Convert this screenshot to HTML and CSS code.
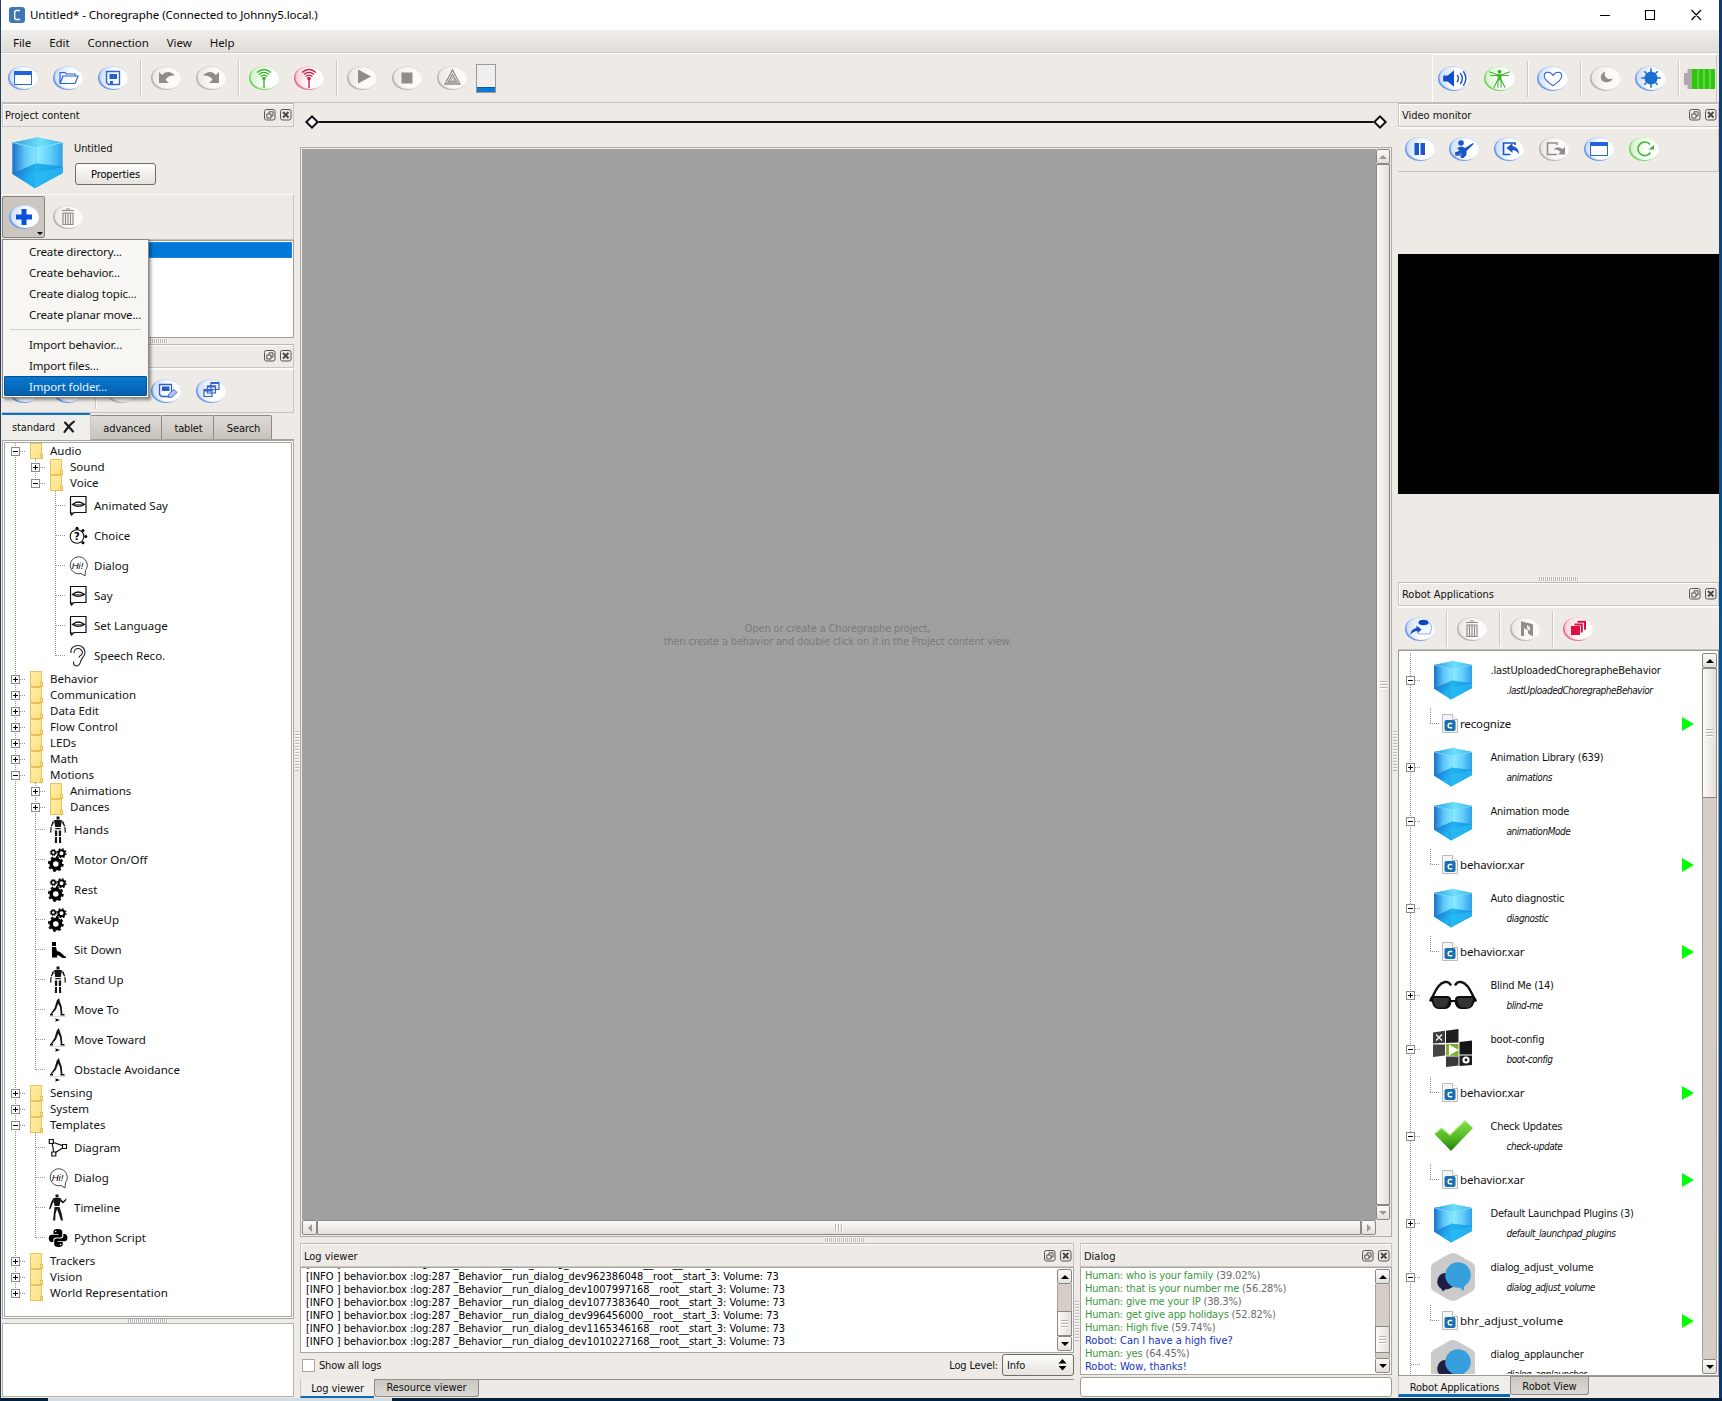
FILE: index.html
```html
<!DOCTYPE html>
<html lang="en">
<head>
<meta charset="utf-8">
<title>Untitled* - Choregraphe</title>
<link rel="stylesheet" href="styles.css">
</head>
<body>
<svg class="defs" width="0" height="0">
  <defs>
    <linearGradient id="g-top" x1="0" y1="0" x2="1" y2="0"><stop offset="0" stop-color="#2a9fe2"/><stop offset=".55" stop-color="#6fe0fa"/><stop offset="1" stop-color="#35b4ee"/></linearGradient>
    <linearGradient id="g-face" x1="0" y1="0" x2="1" y2="0"><stop offset="0" stop-color="#1a6fc8"/><stop offset=".25" stop-color="#5cc6f8"/><stop offset=".5" stop-color="#8debff"/><stop offset=".75" stop-color="#63cffa"/><stop offset="1" stop-color="#2f9fe8"/></linearGradient>
    <linearGradient id="g-low" x1="0" y1="0" x2="1" y2=".3"><stop offset="0" stop-color="#1560c8"/><stop offset=".5" stop-color="#22b4f0"/><stop offset="1" stop-color="#1a8fe2"/></linearGradient>
    <linearGradient id="g-check" x1="0" y1="0" x2="0" y2="1"><stop offset="0" stop-color="#8ade4a"/><stop offset=".6" stop-color="#4fb524"/><stop offset="1" stop-color="#1c7a0c"/></linearGradient>
    <linearGradient id="g-fold" x1="0" y1="0" x2="1" y2="1"><stop offset="0" stop-color="#ffeda6"/><stop offset="1" stop-color="#ffe083"/></linearGradient>
  </defs>
  <symbol id="cube" viewBox="0 0 40 40">
    <path d="M1 5 20 1l19 4v23L18 39.500 1 28.500z" fill="url(#g-face)"/>
    <path d="M1 5 20 1l19 4-20 4z" fill="url(#g-top)"/>
    <path d="M1 28.500l18-8 20 2.500v5L18 39.500z" fill="url(#g-low)"/>
    <path d="M18 39.500l.5-12 20.500-4v4.500z" fill="#2cc4f5" opacity=".6"/>
    <path d="M19 9l-.5 30" stroke="#4ab8f0" stroke-width=".5" opacity=".7"/>
    <path d="M1 5l18 4 20-4" fill="none" stroke="#8fe8ff" stroke-width=".6"/>
  </symbol>
  <symbol id="folder" viewBox="0 0 13 16"><path d="M.5.5h11v11H13v4H.5z" fill="url(#g-fold)" stroke="#e6c35c"/><path d="M10.500 11.500h2v4h-2z" fill="#ffe99a" stroke="#dcb53f" stroke-width=".8"/></symbol>
  <symbol id="say" viewBox="0 0 20 22"><path d="M2.500 19V1.500H18v16H6L3 20.500" fill="none" stroke="#111" stroke-width="1.200"/><path d="M4.500 9.500q5.500-5 12 0q-6.500 3.500-12 0z" fill="none" stroke="#111" stroke-width="1.300"/><path d="M5 9.500h11" stroke="#111" stroke-width=".6"/><path d="M2 17.500h3L3 20.500z" fill="#111"/></symbol>
  <symbol id="choice" viewBox="0 0 20 20"><circle cx="9" cy="10.500" r="6.800" fill="none" stroke="#111" stroke-width="1.100"/><circle cx="9" cy="2.200" r="1.500"/><circle cx="15" cy="4.500" r="1.500"/><circle cx="17.800" cy="10.500" r="1.500"/><circle cx="15" cy="16.800" r="1.500"/></symbol>
  <symbol id="hi" viewBox="0 0 20 22"><path d="M17.500 15.500A8.500 8.500 0 1 0 13 18.500l4 2.500z" fill="none" stroke="#333" stroke-width=".9"/></symbol>
  <symbol id="ear" viewBox="0 0 20 24"><path d="M3 9C2 4 6 1.500 10 1.500s7 3 7 7c0 3.500-3 5-4 8s-1.500 5.500-4.500 5.500-3-2.500-3-4.500M6 9c0-3 2-4.500 4-4.500s4.500 1.500 4.500 4-2.500 2.500-3.500 5" fill="none" stroke="#222" stroke-width="1.100"/></symbol>
  <symbol id="man" viewBox="0 0 20 28"><path d="M8.500.5h3v3h-3zM6 4h8l-1.200 7H7.200zM5 4.500 2.800 10l1.100.4L6 6.500zM15 4.500l2.200 5.500-1.100.4L14 6.500zM2.500 11l1.200.3-.4 5.500-1.200-.3zM17.500 11l-1.200.3.4 5.500 1.200-.3zM7.300 12h5.400v1.200H7.300zM6.800 14.500h2.400v5.500H7zM10.800 14.500h2.400l-.2 5.500h-2.200zM7 21h2v6H6.800zM11 21h2l.2 6H11z" fill="#151515"/></symbol>
  <symbol id="gears" viewBox="0 0 20 24"><g fill="none" stroke="#000"><circle cx="7.800" cy="16" r="4.600" stroke-width="3.600"/><circle cx="7.800" cy="16" r="7" stroke-width="1.800" stroke-dasharray="2.750"/><circle cx="13.500" cy="5.200" r="3" stroke-width="2"/><circle cx="13.500" cy="5.200" r="4.500" stroke-width="1.200" stroke-dasharray="1.770"/><circle cx="5.300" cy="4.600" r="2" stroke-width="1.500"/><circle cx="5.300" cy="4.600" r="3.100" stroke-width="1" stroke-dasharray="1.220"/></g></symbol>
  <symbol id="sit" viewBox="0 0 20 20"><path d="M4 2h4v4H4zM4 7h4l1 4 3 1 5 4.500h1V18h-3.500l-4.500-3-1 1v1.500H4z"/></symbol>
  <symbol id="move" viewBox="0 0 20 26"><path d="M8.800 3.500 11 1l.7 3 2 5.500.8 8.500h-1.600l-1-8-1.700-3.500L8 12.500l-5 5.500L2.500 17 6.500 11z" fill="#151515"/><path d="M2 17h3v1.400H2zM12.500 17h4v1.400h-4z" fill="#151515"/><path d="M1 19.500h17" stroke="#ccc" stroke-width=".7"/><path d="M7 21.300l5 1.700-5 1.700 1-1.700z"/></symbol>
  <symbol id="diagram" viewBox="0 0 20 20"><g fill="#fff" stroke="#111" stroke-width="1.200"><path d="M4 4l13 4.500L6 15.500z"/><path d="M1.300 1.500h4v4h-4zM14.500 6.500h4v4h-4zM3.800 14h4v4h-4z"/></g></symbol>
  <symbol id="timeline" viewBox="0 0 20 28"><path d="M7.500.5h3v3h-3zM5 4h8l-1.500 8H6.500zM4.500 5L2.500 10l-1.500 5h1.500L4.500 10l1.500-3zM13 5l2 2.500L18.500 4l-.5 2.500L15 9.500l-2.500-2zM6.500 13h5l2 6 1.500 7.500h-2L10.500 19 9 15l-1.500 5-.3 6.500H5z" fill="#151515"/></symbol>
  <symbol id="python" viewBox="0 0 22 22"><path d="M10.800 1C7 1 6 2.300 6 4v2.500h5.500V7.300H4C1.800 7.300.8 9 .8 11.300S2 15.500 4 15.500h1.800v-2.400c0-1.600 1.200-2.600 2.700-2.600h5c1.300 0 2.200-1 2.200-2.300V4c0-1.800-1.700-3-4.900-3z"/><path d="M11.400 21c3.800 0 4.800-1.300 4.800-3v-2.500h-5.500v-.8h7.500c2.200 0 3.200-1.700 3.200-4S20.200 6.500 18.200 6.500h-1.300v2.400c0 1.600-1.200 2.600-2.700 2.600h-5c-1.300 0-2.400 1-2.400 2.300V18c0 1.800 1.400 3 4.600 3z"/><circle cx="8.400" cy="3.800" r=".9" fill="#fff"/><circle cx="13.800" cy="18.200" r=".9" fill="#fff"/></symbol>
  <symbol id="xar" viewBox="0 0 16 19"><path d="M.5.5h10l5 5v13H.5z" fill="#f3f5f6" stroke="#b9bcbe"/><path d="M10.500.5v5h5" fill="#fff" stroke="#b9bcbe"/><rect x="2.500" y="6" width="11" height="11" rx="2" fill="#1a6fae"/><path d="M10.300 9.500H8q-1.800 0-1.800 2.100T8 13.700h2.300" fill="none" stroke="#fff" stroke-width="1.500"/></symbol>
  <symbol id="play" viewBox="0 0 12 14"><path d="M0 0l12 7-12 7z" fill="#0f0"/></symbol>
  <symbol id="float" viewBox="0 0 12 12"><rect x=".5" y=".5" width="10.500" height="10.500" rx="2" fill="none" stroke="#555"/><path d="M5 5V2.800h4V7H7M2.800 5H7v4H2.800z" fill="none" stroke="#555"/></symbol>
  <symbol id="close" viewBox="0 0 12 12"><rect x=".5" y=".5" width="10.500" height="10.500" rx="2" fill="none" stroke="#555"/><path d="M3 3l5.500 5.500M8.500 3L3 8.500" stroke="#4a4a4a" stroke-width="2"/></symbol>
  <symbol id="i-new" viewBox="0 0 30 24"><rect x="6.500" y="5.500" width="17" height="13" fill="#fff" stroke="#2e66d8"/><path d="M6 5h18v4H6z" fill="#2463dd"/></symbol>
  <symbol id="i-open" viewBox="0 0 30 24"><path d="M7 17V6.500h5L13.500 8H22v2M7 17.500 10 10h15l-3 7.500z" fill="none" stroke="#2f63d6" stroke-width="1.200"/></symbol>
  <symbol id="i-save" viewBox="0 0 30 24"><path d="M8.500 5.500h13v13h-11l-2-2z" fill="none" stroke="#2f63d6" stroke-width="1.400"/><path d="M11.500 8h7.500v5h-7.500zM12 15h3v3.500h-3z" fill="#2463c9"/></symbol>
  <symbol id="i-undo" viewBox="0 0 30 24"><path d="M8 6v11h10l-3.500-3.300c1.500-2.700 4.500-4.500 9.500-4.200-4-5-10-4.500-12.800-.5z" fill="currentColor"/></symbol>
  <symbol id="i-redo" viewBox="0 0 30 24"><path d="M23 6v11H13l3.500-3.300C15 11 12 9.200 7 9.500 11 4.500 17 5 19.800 9z" fill="currentColor"/></symbol>
  <symbol id="i-wifi" viewBox="0 0 30 24"><path d="M8 6.500q7-6 14 0M9.800 8.500q5.200-4.200 10.400 0M11.600 10.500q3.400-2.800 6.800 0M15 12v10" fill="none" stroke="currentColor" stroke-width="1.400"/><circle cx="15" cy="12.500" r="1.800" fill="currentColor"/></symbol>
  <symbol id="i-play" viewBox="0 0 30 24"><path d="M11 3.500l13 7-13 7z" fill="currentColor"/></symbol>
  <symbol id="i-stop" viewBox="0 0 30 24"><path d="M9.500 6.500h11v11h-11z" fill="currentColor"/></symbol>
  <symbol id="i-warn" viewBox="0 0 30 24"><path d="M15.500 4 23 18H8zM15.500 8.500l4.300 7.500h-8.600z" fill="none" stroke="currentColor" stroke-width="1.300"/><path d="M15.500 11.500l2 3.500h-4z" fill="none" stroke="currentColor" stroke-width=".8"/></symbol>
  <symbol id="i-plus" viewBox="0 0 30 24"><path d="M12.500 4h5v5.500H23v5h-5.500V20h-5v-5.500H7v-5h5.500z" fill="#0a52d4"/></symbol>
  <symbol id="i-trash" viewBox="0 0 30 24"><path d="M9 5.500h12M13 4h4M10 8h10v11.500H10zM12.500 8v11M15 8v11M17.500 8v11" fill="none" stroke="currentColor" stroke-width="1.200"/></symbol>
  <symbol id="i-savepen" viewBox="0 0 30 24"><path d="M8.500 5.500h12v12h-10l-2-2z" fill="none" stroke="#2f5fc0" stroke-width="1.300"/><path d="M11 7.500h7.500v4.500H11z" fill="#2a5cc0"/><path d="M17 18.500l1-4 5-4 3 3-5 4.500z" fill="#a9c4ee" stroke="#3a67b8" stroke-width=".9"/></symbol>
  <symbol id="i-stack" viewBox="0 0 30 24"><g fill="#eaf2ff" stroke="#3464c4" stroke-width="1.200"><path d="M15 3.500h8v7h-8zM11.500 7h8v7h-8zM8 10.500h8v7H8z"/></g><path d="M15 3h8v2h-8zM11.500 6.500h8v2h-8zM8 10h8v2.500H8z" fill="#3464c4"/></symbol>
  <symbol id="i-sound" viewBox="0 0 30 24"><path d="M5 9h4.500l6-5v16l-6-5H5z" fill="#0f4fc9"/><path d="M18.500 8.500q2.500 3.500 0 7M21.500 6.500q4 5.500 0 11M24.500 5q5 7 0 14" fill="none" stroke="#1d57cc" stroke-width="1.400"/></symbol>
  <symbol id="i-vitruv" viewBox="0 0 30 24"><path d="M5 5.500l10 3.500 10-3.500M6 9h18M14 12l-4.500 9M16 12l4.500 9M13.500 13v8M16.500 13v8" fill="none" stroke="currentColor" stroke-width="1"/><path d="M12.800 8h4.400l-.7 6h-3z" fill="currentColor"/><circle cx="15" cy="5.500" r="1.900" fill="currentColor"/></symbol>
  <symbol id="i-heart" viewBox="0 0 30 24"><path d="M15.500 19C9 14.500 7 12 7 9.500 7 5 13 4.500 15.500 9c2.500-4.500 8.500-4 8.500.5 0 2.500-2 5-8.500 9.500z" fill="#fff" stroke="#2a5fd0"/></symbol>
  <symbol id="i-moon" viewBox="0 0 30 24"><path d="M14.500 5.500c-1.500 5 2.500 8.500 7.500 6.500-2 5.500-11.500 4.500-11.500-1 0-2.500 1.500-4.800 4-5.500z" fill="currentColor"/></symbol>
  <symbol id="i-sun" viewBox="0 0 30 24"><circle cx="15.500" cy="11.500" r="6.300" fill="#1b6fd0"/><path d="M15.500 2v19M6 11.500h19M9 5l13 13M22 5L9 18" stroke="#1b6fd0" stroke-width="1.500"/></symbol>
  <symbol id="i-pause" viewBox="0 0 30 24"><path d="M9.500 6H14v12H9.500zM15.500 6H20v12h-4.500z" fill="#1a56c8"/></symbol>
  <symbol id="i-robot" viewBox="0 0 30 24"><circle cx="12" cy="6" r="2.800" fill="#1a56c8"/><path d="M8 11q5-3 8 0l8-5 .8 1L17.500 14v4l-3 3h-3l1-4.500-5 1-1-2 4-2z" fill="#1a56c8"/><path d="M7 15v3h5" stroke="#1a56c8" stroke-width="1.500" fill="none"/></symbol>
  <symbol id="i-in" viewBox="0 0 30 24"><path d="M21 8V6H9.500v11.500h7" fill="none" stroke="currentColor" stroke-width="1.600"/><path d="M12.500 11l6-5v3q6.500 1 6.500 8.500-2.500-4.500-6.500-4.500v3z" fill="currentColor"/></symbol>
  <symbol id="i-out" viewBox="0 0 30 24"><path d="M18 8V6H8.500v11.500H18" fill="none" stroke="currentColor" stroke-width="1.600"/><path d="M26 17.500h-7l2.500-2.500q-2-3-7-2.500 4-4 9-.5l2.500-2z" fill="currentColor"/></symbol>
  <symbol id="i-refresh" viewBox="0 0 30 24"><path d="M21 7.500a6.800 6.800 0 1 0 .5 8" fill="none" stroke="currentColor" stroke-width="1.600"/><path d="M25 8v4.500h-5.500z" fill="currentColor"/></symbol>
  <symbol id="i-upload" viewBox="0 0 30 24"><path d="M14 6h11l2 4-2 7H13" fill="#f4f8ff" stroke="#8fb0e6"/><ellipse cx="18.500" cy="5.500" rx="5" ry="2.800" fill="#0d46b8"/><path d="M5 18q1-6 6.500-7V8.500l5 4-4 4V14q-4 0-7.500 4z" fill="#1450c4"/></symbol>
  <symbol id="i-flag" viewBox="0 0 30 24"><path d="M11 19V4l6 2v-.5l6 2v12l-5-3v-3l-4-2.500v8z" fill="currentColor"/><path d="M17 8v4l3 2v-4z" fill="#eeece8"/></symbol>
  <symbol id="i-redstack" viewBox="0 0 30 24"><path d="M8 9h9v9H8z" fill="#dd1040"/><path d="M11.500 7.500h7.300v8M14.500 4.800h7.500v8" fill="none" stroke="#dd1040" stroke-width="2"/></symbol>
</svg>

<div class="window">
  <header class="titlebar">
    <svg class="logo" viewBox="0 0 16 16"><rect width="16" height="16" rx="3" fill="#3e76b4"/><path d="M11 3.500H7.500q-1.800 0-1.800 2v5q0 2 1.800 2H11" fill="none" stroke="#fff" stroke-width="1.400"/></svg>
    <span class="title">Untitled* - Choregraphe (Connected to Johnny5.local.)</span>
    <svg class="winctl" viewBox="0 0 104 12"><path d="M0 6.500h10M45.500 1.500h9v9h-9zM91.500 1l9.500 10M101 1l-9.500 10" fill="none" stroke="#000" stroke-width="1.100"/></svg>
  </header>
  <nav class="menubar"><span>File</span><span>Edit</span><span>Connection</span><span>View</span><span>Help</span></nav>

  <div class="toolbar main-tools">
    <div class="group">
      <b class="btn"><svg class="orb blue"><use href="#i-new"/></svg></b>
      <b class="btn"><svg class="orb blue"><use href="#i-open"/></svg></b>
      <b class="btn"><svg class="orb blue"><use href="#i-save"/></svg></b>
      <i class="sep"></i>
      <b class="btn"><svg class="orb gray"><use href="#i-undo"/></svg></b>
      <b class="btn"><svg class="orb gray"><use href="#i-redo"/></svg></b>
      <i class="sep"></i>
      <b class="btn"><svg class="orb green"><use href="#i-wifi"/></svg></b>
      <b class="btn"><svg class="orb red"><use href="#i-wifi"/></svg></b>
      <i class="sep"></i>
      <b class="btn"><svg class="orb gray"><use href="#i-play"/></svg></b>
      <b class="btn"><svg class="orb gray"><use href="#i-stop"/></svg></b>
      <b class="btn"><svg class="orb gray"><use href="#i-warn"/></svg></b>
      <i class="gauge"></i>
    </div>
    <div class="group robot-tools">
      <b class="btn"><svg class="orb blue big"><use href="#i-sound"/></svg></b>
      <b class="btn"><svg class="orb green big"><use href="#i-vitruv"/></svg></b>
      <i class="sep"></i>
      <b class="btn"><svg class="orb blue big"><use href="#i-heart"/></svg></b>
      <i class="sep"></i>
      <b class="btn"><svg class="orb gray big"><use href="#i-moon"/></svg></b>
      <b class="btn"><svg class="orb blue big"><use href="#i-sun"/></svg></b>
      <i class="sep"></i>
      <svg class="battery" viewBox="0 0 31 20"><path d="M8 0v20H3.500v-4H0V4h3.500V0z" fill="#aaa"/><path d="M8 0h23v20H8z" fill="#2fc50c"/><path d="M14 0v20M20 0v20M26 0v20" stroke="#8ee87c"/></svg>
    </div>
  </div>

  <main class="work">
    <section class="col left">
      <div class="dock-title"><span>Project content</span><svg><use href="#float"/></svg><svg><use href="#close"/></svg></div>
      <div class="project">
        <svg class="cube-lg" viewBox="0 0 40 40"><use href="#cube"/></svg>
        <div><p>Untitled</p><button class="push">Properties</button></div>
      </div>
      <div class="toolbar project-tools">
        <b class="btn pressed"><svg class="orb blue"><use href="#i-plus"/></svg><i class="drop"></i></b>
        <b class="btn"><svg class="orb gray"><use href="#i-trash"/></svg></b>
        <div class="menu">
          <p>Create directory...</p><p>Create behavior...</p><p>Create dialog topic...</p><p>Create planar move...</p>
          <hr>
          <p>Import behavior...</p><p>Import files...</p><p class="on">Import folder...</p>
        </div>
      </div>
      <div class="file-list"><i class="sel"></i></div>
      <div class="hsplit"><i></i></div>
      <div class="dock-title lib-title"><span></span><svg><use href="#float"/></svg><svg><use href="#close"/></svg></div>
      <div class="toolbar lib-tools">
        <b class="btn"><svg class="orb blue"></svg></b>
        <b class="btn"><svg class="orb blue"></svg></b>
        <i class="sep"></i>
        <b class="btn"><svg class="orb gray"></svg></b>
        <b class="btn"><svg class="orb blue"><use href="#i-savepen"/></svg></b>
        <b class="btn"><svg class="orb blue"><use href="#i-stack"/></svg></b>
      </div>
      <div class="tabs-top">
        <span class="tab on">standard<svg viewBox="0 0 14 14"><path d="M3 2.500 11 11.500M12 1.500Q7 5 2.500 12" fill="none" stroke="#1a1a1a" stroke-width="2.100" stroke-linecap="round"/></svg></span>
        <span class="tab t-adv">advanced</span><span class="tab t-tab">tablet</span><span class="tab t-sea">Search</span>
      </div>
      <div class="tree-frame">
        <ul class="tree">
          <li><p class="f"><i class="ex minus"></i><svg><use href="#folder"/></svg>Audio</p>
            <ul>
              <li><p class="f"><i class="ex"></i><svg><use href="#folder"/></svg>Sound</p></li>
              <li><p class="f"><i class="ex minus"></i><svg><use href="#folder"/></svg>Voice</p>
                <ul>
                  <li><p class="leaf"><svg><use href="#say"/></svg>Animated Say</p></li>
                  <li><p class="leaf"><svg viewBox="0 0 20 20"><use href="#choice"/><text x="9" y="14.200" text-anchor="middle" class="glyph-q">?</text></svg>Choice</p></li>
                  <li><p class="leaf"><svg viewBox="0 0 20 22"><use href="#hi"/><text x="9.500" y="14" text-anchor="middle" class="glyph-hi">Hi!</text></svg>Dialog</p></li>
                  <li><p class="leaf"><svg><use href="#say"/></svg>Say</p></li>
                  <li><p class="leaf"><svg><use href="#say"/></svg>Set Language</p></li>
                  <li><p class="leaf"><svg><use href="#ear"/></svg>Speech Reco.</p></li>
                </ul></li>
            </ul></li>
          <li><p class="f"><i class="ex"></i><svg><use href="#folder"/></svg>Behavior</p></li>
          <li><p class="f"><i class="ex"></i><svg><use href="#folder"/></svg>Communication</p></li>
          <li><p class="f"><i class="ex"></i><svg><use href="#folder"/></svg>Data Edit</p></li>
          <li><p class="f"><i class="ex"></i><svg><use href="#folder"/></svg>Flow Control</p></li>
          <li><p class="f"><i class="ex"></i><svg><use href="#folder"/></svg>LEDs</p></li>
          <li><p class="f"><i class="ex"></i><svg><use href="#folder"/></svg>Math</p></li>
          <li><p class="f"><i class="ex minus"></i><svg><use href="#folder"/></svg>Motions</p>
            <ul>
              <li><p class="f"><i class="ex"></i><svg><use href="#folder"/></svg>Animations</p></li>
              <li><p class="f"><i class="ex"></i><svg><use href="#folder"/></svg>Dances</p></li>
              <li><p class="leaf"><svg><use href="#man"/></svg>Hands</p></li>
              <li><p class="leaf"><svg><use href="#gears"/></svg>Motor On/Off</p></li>
              <li><p class="leaf"><svg><use href="#gears"/></svg>Rest</p></li>
              <li><p class="leaf"><svg><use href="#gears"/></svg>WakeUp</p></li>
              <li><p class="leaf"><svg><use href="#sit"/></svg>Sit Down</p></li>
              <li><p class="leaf"><svg><use href="#man"/></svg>Stand Up</p></li>
              <li><p class="leaf"><svg><use href="#move"/></svg>Move To</p></li>
              <li><p class="leaf"><svg><use href="#move"/></svg>Move Toward</p></li>
              <li><p class="leaf"><svg><use href="#move"/></svg>Obstacle Avoidance</p></li>
            </ul></li>
          <li><p class="f"><i class="ex"></i><svg><use href="#folder"/></svg>Sensing</p></li>
          <li><p class="f"><i class="ex"></i><svg><use href="#folder"/></svg>System</p></li>
          <li><p class="f"><i class="ex minus"></i><svg><use href="#folder"/></svg>Templates</p>
            <ul>
              <li><p class="leaf"><svg><use href="#diagram"/></svg>Diagram</p></li>
              <li><p class="leaf"><svg viewBox="0 0 20 22"><use href="#hi"/><text x="9.500" y="14" text-anchor="middle" class="glyph-hi">Hi!</text></svg>Dialog</p></li>
              <li><p class="leaf"><svg><use href="#timeline"/></svg>Timeline</p></li>
              <li><p class="leaf"><svg><use href="#python"/></svg>Python Script</p></li>
            </ul></li>
          <li><p class="f"><i class="ex"></i><svg><use href="#folder"/></svg>Trackers</p></li>
          <li><p class="f"><i class="ex"></i><svg><use href="#folder"/></svg>Vision</p></li>
          <li><p class="f"><i class="ex"></i><svg><use href="#folder"/></svg>World Representation</p></li>
        </ul>
      </div>
      <div class="hsplit thin"><i></i></div>
      <div class="desc"></div>
    </section>

    <div class="vsplit"><i></i></div>

    <section class="col center">
      <div class="timebar"><i class="dia"></i><i class="line"></i><i class="dia"></i></div>
      <div class="canvas">
        <div class="stage"><p>Open or create a Choregraphe project,<br>then create a behavior and double click on it in the Project content view.</p></div>
        <div class="vscroll off"><i class="ar up"></i><i class="thumb"></i><i class="ar down"></i></div>
        <div class="hscroll"><i class="ar lt"></i><i class="thumb"></i><i class="ar rt"></i></div>
      </div>
      <div class="hsplit mid"><i></i></div>
      <div class="bottom">
        <div class="log">
          <div class="dock-title"><span>Log viewer</span><svg><use href="#float"/></svg><svg><use href="#close"/></svg></div>
          <div class="textbox">
            <div class="lines">
              <p>[INFO ] behavior.box :log:287 _Behavior__run_dialog_dev962386048__root__start_3: Volume: 73</p>
              <p>[INFO ] behavior.box :log:287 _Behavior__run_dialog_dev962386048__root__start_3: Volume: 73</p>
              <p>[INFO ] behavior.box :log:287 _Behavior__run_dialog_dev1007997168__root__start_3: Volume: 73</p>
              <p>[INFO ] behavior.box :log:287 _Behavior__run_dialog_dev1077383640__root__start_3: Volume: 73</p>
              <p>[INFO ] behavior.box :log:287 _Behavior__run_dialog_dev996456000__root__start_3: Volume: 73</p>
              <p>[INFO ] behavior.box :log:287 _Behavior__run_dialog_dev1165346168__root__start_3: Volume: 73</p>
              <p>[INFO ] behavior.box :log:287 _Behavior__run_dialog_dev1010227168__root__start_3: Volume: 73</p>
            </div>
            <div class="vscroll"><i class="ar up"></i><i class="track log-track"></i><i class="thumb"></i><i class="ar down"></i></div>
          </div>
          <div class="logbar"><i class="check"></i><span class="all">Show all logs</span><span class="level">Log Level:</span><span class="combo">Info<svg viewBox="0 0 9 12"><path d="M4.500 0 8.500 4.500h-8zM.5 7h8l-4 4.500z"/></svg></span></div>
          <div class="tabs-bottom"><span class="tab on">Log viewer</span><span class="tab res">Resource viewer</span></div>
        </div>
        <div class="vsplit"><i></i></div>
        <div class="dialog">
          <div class="dock-title"><span>Dialog</span><svg><use href="#float"/></svg><svg><use href="#close"/></svg></div>
          <div class="textbox">
            <div class="lines">
              <p>Human: who is your family <em>(39.02%)</em></p>
              <p>Human: that is your number me <em>(56.28%)</em></p>
              <p>Human: give me your IP <em>(38.3%)</em></p>
              <p>Human: get give app holidays <em>(52.82%)</em></p>
              <p>Human: High five <em>(59.74%)</em></p>
              <p class="robot">Robot: Can I have a high five?</p>
              <p>Human: yes <em>(64.45%)</em></p>
              <p class="robot">Robot: Wow, thanks!</p>
            </div>
            <div class="vscroll"><i class="ar up"></i><i class="track dlg-track"></i><i class="thumb"></i><i class="track end"></i><i class="ar down"></i></div>
          </div>
          <div class="entry"></div>
        </div>
      </div>
    </section>

    <div class="vsplit"><i></i></div>

    <section class="col right">
      <div class="dock-title"><span>Video monitor</span><svg><use href="#float"/></svg><svg><use href="#close"/></svg></div>
      <div class="toolbar video-tools">
        <b class="btn"><svg class="orb blue"><use href="#i-pause"/></svg></b>
        <b class="btn"><svg class="orb blue"><use href="#i-robot"/></svg></b>
        <b class="btn"><svg class="orb blue"><use href="#i-in"/></svg></b>
        <b class="btn"><svg class="orb gray"><use href="#i-out"/></svg></b>
        <b class="btn"><svg class="orb blue"><use href="#i-new"/></svg></b>
        <b class="btn"><svg class="orb green"><use href="#i-refresh"/></svg></b>
      </div>
      <div class="video-pane"><div class="video"></div></div>
      <div class="hsplit apps-split"><i></i></div>
      <div class="dock-title"><span>Robot Applications</span><svg><use href="#float"/></svg><svg><use href="#close"/></svg></div>
      <div class="toolbar app-tools">
        <b class="btn"><svg class="orb blue"><use href="#i-upload"/></svg></b><i class="sep"></i>
        <b class="btn"><svg class="orb gray"><use href="#i-trash"/></svg></b><i class="sep"></i>
        <b class="btn"><svg class="orb gray"><use href="#i-flag"/></svg></b><i class="sep"></i>
        <b class="btn"><svg class="orb red"><use href="#i-redstack"/></svg></b>
      </div>
      <div class="apps-frame">
        <div class="apps">
          <div class="app"><i class="ex minus"></i><svg class="pic" viewBox="-4 -4 48 48"><use href="#cube" width="40" height="40"/></svg><div><p>.lastUploadedChoregrapheBehavior</p><em>.lastUploadedChoregrapheBehavior</em></div></div>
          <div class="beh"><i class="elbow"></i><svg class="xar"><use href="#xar"/></svg><span>recognize</span><svg class="run"><use href="#play"/></svg></div>
          <div class="app"><i class="ex"></i><svg class="pic" viewBox="-4 -4 48 48"><use href="#cube" width="40" height="40"/></svg><div><p class="w">Animation Library (639)</p><em>animations</em></div></div>
          <div class="app"><i class="ex minus"></i><svg class="pic" viewBox="-4 -4 48 48"><use href="#cube" width="40" height="40"/></svg><div><p class="w">Animation mode</p><em>animationMode</em></div></div>
          <div class="beh"><i class="elbow"></i><svg class="xar"><use href="#xar"/></svg><span>behavior.xar</span><svg class="run"><use href="#play"/></svg></div>
          <div class="app"><i class="ex minus"></i><svg class="pic" viewBox="-4 -4 48 48"><use href="#cube" width="40" height="40"/></svg><div><p class="w">Auto diagnostic</p><em>diagnostic</em></div></div>
          <div class="beh"><i class="elbow"></i><svg class="xar"><use href="#xar"/></svg><span>behavior.xar</span><svg class="run"><use href="#play"/></svg></div>
          <div class="app"><i class="ex"></i><svg class="pic" viewBox="0 0 48 48"><path d="M3 27C8 16 11 12 16 11q4-.5 6 3.500M45 27C40 16 37 12 32 11q-4-.5-6 3.500" fill="none" stroke="#111" stroke-width="2.300"/><path d="M0 30q1-4 3-5h15q4 0 4 4h4q0-4 4-4h14q3 1 4 5l-3 1.500q-1 6.500-8 6.500h-5q-5 0-6.500-7h-3q-1 7-6.500 7h-6q-6 0-7-7z" fill="#0c0c0c"/><path d="M4 27h16q-1 9.500-5 9.500H9q-4 0-5-9.500zM28 27h16q-1 9.500-5 9.500h-5q-5 0-6-9.500z" fill="#333"/></svg><div><p class="w">Blind Me (14)</p><em>blind-me</em></div></div>
          <div class="app"><i class="ex minus"></i><svg class="pic" viewBox="0 0 48 48"><path d="M4 7.500l12-1.700v12L4 18.500z" fill="#3c3c3c"/><path d="M17 5.700 29.500 4v13.500L17 18z" fill="#1e1e1e"/><path d="M4 19.500h12v11L4 32z" fill="#444"/><path d="M17 19h12.500v12L17 30.500z" fill="#7fae2a"/><path d="M30.500 17l12.500-1.500v14H30.500z" fill="#161616"/><path d="M17 31.500h12.500v9L17 42z" fill="#3a3a3a"/><path d="M30.500 30.500H43v9.500l-12.500 1z" fill="#1c1c1c"/><path d="M20.500 20.500l8 4.500-8 4.500zM7 9.500l6 6M13 9.500l-6 6" stroke="#fff" stroke-width="1.200" fill="#fff"/><circle cx="37" cy="35" r="2.500" fill="none" stroke="#fff" stroke-width="2.200"/></svg><div><p class="w">boot-config</p><em>boot-config</em></div></div>
          <div class="beh"><i class="elbow"></i><svg class="xar"><use href="#xar"/></svg><span>behavior.xar</span><svg class="run"><use href="#play"/></svg></div>
          <div class="app"><i class="ex minus"></i><svg class="pic" viewBox="0 0 48 48"><path d="M5.500 22l7-6 8.500 7L36 8.500l8 7.500-22 23z" fill="url(#g-check)"/><path d="M5.500 22l7-6 8.500 7L36 8.500" fill="none" stroke="#b6f07e" stroke-width="1.200"/></svg><div><p class="w">Check Updates</p><em>check-update</em></div></div>
          <div class="beh"><i class="elbow"></i><svg class="xar"><use href="#xar"/></svg><span>behavior.xar</span><svg class="run"><use href="#play"/></svg></div>
          <div class="app"><i class="ex"></i><svg class="pic" viewBox="-4 -4 48 48"><use href="#cube" width="40" height="40"/></svg><div><p class="w">Default Launchpad Plugins (3)</p><em>default_launchpad_plugins</em></div></div>
          <div class="app"><i class="ex minus"></i><svg class="pic" viewBox="0 0 48 48"><path d="M24 0q2 0 4 1l14 8q4 2 4 5v20q0 3-4 5l-14 8q-4 2-8 0L6 39q-4-2-4-5V14q0-3 4-5l14-8q2-1 4-1z" fill="#cbcbcb"/><path d="M17 20a8.500 8.500 0 0 0-5 15.500l2 3 2-2q5 0 8-3z" fill="#1f1f45"/><circle cx="29" cy="22" r="12.800" fill="#369fdc"/><path d="M29 33l5.500 5 1-6z" fill="#369fdc"/></svg><div><p class="w">dialog_adjust_volume</p><em>dialog_adjust_volume</em></div></div>
          <div class="beh"><i class="elbow"></i><svg class="xar"><use href="#xar"/></svg><span class="wide">bhr_adjust_volume</span><svg class="run"><use href="#play"/></svg></div>
          <div class="app"><i class="ex none"></i><svg class="pic" viewBox="0 0 48 48"><path d="M24 0q2 0 4 1l14 8q4 2 4 5v20q0 3-4 5l-14 8q-4 2-8 0L6 39q-4-2-4-5V14q0-3 4-5l14-8q2-1 4-1z" fill="#cbcbcb"/><path d="M17 20a8.500 8.500 0 0 0-5 15.500l2 3 2-2q5 0 8-3z" fill="#1f1f45"/><circle cx="29" cy="22" r="12.800" fill="#369fdc"/><path d="M29 33l5.500 5 1-6z" fill="#369fdc"/></svg><div><p class="w">dialog_applauncher</p><em>dialog_applauncher</em></div></div>
        </div>
        <div class="vscroll apps-scroll"><i class="ar up"></i><i class="thumb"></i><i class="track"></i><i class="ar down"></i></div>
      </div>
      <div class="tabs-bottom apps-tabs"><span class="tab on ra">Robot Applications</span><span class="tab rv">Robot View</span></div>
    </section>
  </main>
</div>
<footer class="taskbar"><i></i></footer>
</body>
</html>
```
FILE: styles.css
```css
* { box-sizing: border-box; margin: 0; padding: 0; }
html, body { width: 1722px; height: 1401px; overflow: hidden; }
body {
  background: linear-gradient(#0c3c6c, #08559a 50%, #063a70);
  color: #111;
  font: 11px/13px "DejaVu Sans Condensed", "DejaVu Sans", sans-serif;
  letter-spacing: -0.1px;
  white-space: nowrap;
}
i, em { font-style: normal; }
svg { display: block; flex: none; }
.defs { position: absolute; }

.window { width: 1719px; height: 1398px; background: #eeebe7; border-left: 1px solid #24405a; display: flex; flex-direction: column; }
.taskbar { height: 3px; background: #04213c; display: flex; padding-left: 48px; }
.taskbar i { width: 344px; background: #d5dde4; }

/* title and menus */
.titlebar { height: 30px; background: #fff; display: flex; align-items: center; padding: 0 15px 1px 8px; }
.logo { width: 16px; height: 16px; }
.title { flex: 1; margin-left: 5px; font: 11.5px/16px "Noto Sans", sans-serif; letter-spacing: -0.05px; color: #000; }
.winctl { width: 104px; height: 12px; }
.menubar { height: 23px; background: linear-gradient(#f0eeeb, #e1ddd8); border-bottom: 1px solid #cfcbc6; display: flex; gap: 18px; padding: 4px 12px; font: 11.5px/17px "Noto Sans", sans-serif; letter-spacing: -0.05px; }

/* toolbars */
.toolbar { display: flex; align-items: center; border-top: 2px solid #fbfaf9; border-bottom: 1px solid #c5c1bc; }
.main-tools { height: 50px; justify-content: space-between; border-top-width: 1px; padding-right: 2px; }
.group { display: flex; align-items: center; height: 48px; margin-left: -1px; }
.robot-tools { border: 1px solid #c9c5c0; border-top: 1px solid #fff; border-left: 1px solid #fff; border-bottom: 0; width: 285px; }
.robot-tools .btn:first-child { width: 44px; padding-right: 3px; }
.btn { width: 45px; display: flex; justify-content: center; flex: none; }
.sep { width: 8px; height: 36px; flex: none; background: linear-gradient(90deg, transparent 5px, #cbc7c2 5px 6px, #fff 6px 7px, transparent 7px); }
.orb { width: 30px; height: 24px; border-radius: 50%; }
.orb.big { width: 31px; height: 25px; }
.blue { color: #1f55c8; background: linear-gradient(100deg, #c3d7fa, #fff 55%); box-shadow: inset 1.5px -1px 1px #6a94e4, inset 0 1px 1px #c9d8f3; }
.gray { color: #908d88; background: linear-gradient(100deg, #e8e5e0, #fcfbfa 60%); box-shadow: inset 1.5px -1px 1px #b5b1ac, inset 0 1px 1px #dedad5; }
.green { color: #3db52c; background: linear-gradient(100deg, #c6f3bd, #fff 55%); box-shadow: inset 1.5px -1px 1px #6fd05e, inset 0 1px 1px #cdeec6; }
.red { color: #cc1c44; background: linear-gradient(100deg, #fbc6d1, #fff 55%); box-shadow: inset 1.5px -1px 1px #e66882, inset 0 1px 1px #f4ccd4; }
.gauge { width: 20px; height: 29px; margin-left: 2px; border: 1px solid #9c9a97; background: linear-gradient(#f0efed 22px, #0a5aa0 22px 23px, #0b7ad6 23px); }
.battery { width: 31px; height: 20px; margin-left: 3px; }

/* frame */
.work { flex: 1; display: flex; padding-left: 1px; min-height: 0; }
.col { display: flex; flex-direction: column; }
.left { width: 292px; padding-bottom: 1px; }
.center { width: 1092px; }
.right { width: 321px; }
.vsplit { width: 6px; display: flex; align-items: center; justify-content: center; }
.vsplit i { width: 4px; height: 40px; background: repeating-linear-gradient(#bcb8b3 0 1px, #fbfaf9 1px 2px, #eeebe7 2px 3px); }
.hsplit { height: 6px; display: flex; align-items: center; justify-content: center; flex: none; }
.hsplit i { width: 40px; height: 4px; background: repeating-linear-gradient(90deg, #bcb8b3 0 1px, #fbfaf9 1px 2px); }
.hsplit.thin { height: 4px; }
.hsplit.mid i { margin-right: 2px; }
.dock-title { height: 24px; flex: none; display: flex; align-items: center; gap: 4px; border: 1px solid #c9c5c0; border-top: 1px solid #bdb9b4; box-shadow: inset 1px 1px #fff; padding: 0 1px 1px 2px; letter-spacing: -0.02px; }
.dock-title span { flex: 1; padding-top: 1px; }
.right .dock-title { padding-left: 3px; }
.bottom .dock-title { padding: 1px 1px 0 3px; }
.dock-title svg { width: 12px; height: 12px; }

/* project */
.project { height: 67px; display: flex; padding: 9px 0 0 9px; gap: 10px; flex: none; }
.cube-lg { width: 53px; height: 53px; }
.project p { margin: 6px 0 8px; }
.push { width: 81px; height: 22px; display: block; margin-left: 1px; font: inherit; letter-spacing: -0.1px; border: 1px solid #6f6b67; border-radius: 3px; background: linear-gradient(#fefefd, #e6e2dd); }
.project-tools { height: 46px; flex: none; position: relative; border-right: 1px solid #c9c5c0; border-top-width: 1px; }
.project-tools .pressed { width: 43px; height: 42px; border: 1px solid #85817c; border-radius: 2px; background: #cbc6c0; align-items: center; position: relative; }
.drop { position: absolute; right: 1px; bottom: 2px; border: 3px solid transparent; border-top-color: #000; border-bottom: 0; }
.file-list { height: 98px; flex: none; background: #fff; border: 1px solid #a29f9a; padding: 1px; }
.sel { display: block; height: 16px; background: #0078d7; border: 1px dotted #2f93e6; }
.lib-tools { height: 45px; flex: none; border-right: 1px solid #c9c5c0; padding-bottom: 1px; }
.lib-tools .btn:first-child { width: 43px; }
.menu {
  position: absolute; left: 0; top: 44px; z-index: 5; width: 147px; height: 159px; padding: 1px 2px;
  background: #f8f6f2; border: 1px solid #8b8782; box-shadow: 2px 2px 3px rgba(0, 0, 0, .4);
  font: 11.5px/21px "Noto Sans", sans-serif; letter-spacing: -0.14px;
}
.menu p { height: 21px; padding-left: 24px; }
.menu hr { border: 0; border-top: 1px solid #d3cfca; margin: 4px 5px 4px; }
.menu .on { color: #e6f0fb; background: linear-gradient(#0a77d0, #0560ad); border: 1px solid #0a4f8f; line-height: 19px; border-radius: 1px; height: 20px; margin: 0 -1px; padding-left: 24px; }

/* tabs */
.tabs-top { height: 27px; display: flex; align-items: flex-end; flex: none; border-bottom: 1px solid #a5a19c; letter-spacing: -0.12px; }
.tabs-top .tab { height: 24px; line-height: 25px; border: 1px solid #8e8a85; border-left: 0; border-bottom: 0; border-radius: 0 2px 0 0; background: linear-gradient(#dedad5, #c8c3bd); text-align: center; padding-left: 2px; }
.tabs-top .on { height: 27px; width: 89px; background: #f0eeeb; border-color: #c9c5c0; border-top: 2px solid #0a74cc; margin-bottom: -1px; display: flex; gap: 7px; padding-left: 10px; line-height: 25px; }
.tabs-top .on svg { width: 14px; height: 14px; margin-top: 5px; }
.t-adv { width: 71px; } .t-tab { width: 52px; } .t-sea { width: 58px; }
.tabs-bottom { display: flex; border-top: 1px solid #96928d; height: 20px; letter-spacing: -0.1px; flex: none; }
.tabs-bottom .tab { height: 17px; line-height: 16px; text-align: center; border: 1px solid #8e8a85; border-top: 0; border-radius: 0 0 3px 3px; background: linear-gradient(#cbc6c0, #dcd8d3); width: 105px; }
.tabs-bottom .on { height: 20px; margin-top: -1px; width: 74px; line-height: 20px; background: #f0eeeb; border: 0; border-bottom: 3px solid #0a6ab4; border-radius: 0; border-left: 1px solid #c9c5c0; }
.apps-tabs { height: 21px; }
.apps-tabs .ra { width: 112px; height: 21px; line-height: 24px; letter-spacing: -0.15px; }
.apps-tabs .rv { width: 79px; height: 18px; line-height: 20px; }

/* box library tree */
.tree-frame { flex: 1; border: 3px double #a9a5a0; background: #fff; padding: 0 6px; font: 11.5px/16px "Noto Sans", sans-serif; letter-spacing: 0; min-height: 0; }
.tree ul { padding-left: 20px; }
.tree { --dots: repeating-linear-gradient(#909090 0 1px, transparent 1px 2px); }
.tree li { list-style: none; background: var(--dots) 4px 0 / 1px 100% no-repeat; }
.tree li:last-child { background-size: 1px 8px; }
.tree li:last-child:has(> .leaf) { background-size: 1px 15px; }
.tree p { display: flex; align-items: center; }
.f { height: 16px; }
.f svg { width: 13px; height: 16px; margin: 0 7px 0 5px; }
.ex { width: 14px; height: 9px; flex: none; background:
  linear-gradient(#000, #000) 2px 4px / 5px 1px no-repeat,
  linear-gradient(#000, #000) 4px 2px / 1px 5px no-repeat,
  linear-gradient(#fff, #fff) 1px 1px / 7px 7px no-repeat,
  linear-gradient(#8a8a8a, #8a8a8a) 0 0 / 9px 9px no-repeat,
  repeating-linear-gradient(90deg, #999 0 1px, transparent 1px 2px) 9px 4px / 5px 1px no-repeat; }
.ex.minus { background:
  linear-gradient(#000, #000) 2px 4px / 5px 1px no-repeat,
  linear-gradient(#fff, #fff) 1px 1px / 7px 7px no-repeat,
  linear-gradient(#8a8a8a, #8a8a8a) 0 0 / 9px 9px no-repeat,
  repeating-linear-gradient(90deg, #999 0 1px, transparent 1px 2px) 9px 4px / 5px 1px no-repeat; }
.ex.none { background: repeating-linear-gradient(90deg, #999 0 1px, transparent 1px 2px) 5px 4px / 9px 1px no-repeat; }
.leaf { height: 30px; padding-left: 17px; background: repeating-linear-gradient(90deg, #999 0 1px, transparent 1px 2px) 5px 14px / 9px 1px no-repeat; }
.leaf svg { width: 20px; height: 28px; margin-right: 6px; }
.glyph-q { font: bold 10px "DejaVu Sans", sans-serif; letter-spacing: 0; }
.glyph-hi { font: italic 9.5px "Liberation Sans", sans-serif; letter-spacing: 0; }
.desc { height: 74px; flex: none; background: #fff; border: 1px solid #b5b1ac; }

/* editor */
.timebar { height: 44px; display: flex; align-items: center; padding: 0 7px 7px; flex: none; }
.line { height: 2px; background: #111; flex: 1; }
.dia { width: 10px; height: 10px; border: 2px solid #111; background: #fff; transform: rotate(45deg); }
.canvas { height: 1090px; flex: none; border: 1px solid #b0aca7; display: grid; grid-template: 1fr 15px / 1fr 15px; padding: 1px 0 1px 1px; }
.canvas .vscroll { margin-right: 1px; }
.stage { background: #a0a0a0; display: flex; align-items: center; justify-content: center; text-align: center; color: #7b7b7b; letter-spacing: -0.16px; }
.stage p { margin: -99px 3px 0 0; }
.vscroll { width: 15px; display: flex; flex-direction: column; flex: none; }
.hscroll { height: 15px; display: flex; }
.ar { width: 15px; height: 15px; flex: none; border: 1px solid #8b8782; border-radius: 2px; background: linear-gradient(#fcfbfa, #e4e0db); display: flex; align-items: center; justify-content: center; }
.ar::after { content: ""; border: 4px solid transparent; }
.up::after { border-bottom-color: #000; border-top: 0; }
.down::after { border-top-color: #000; border-bottom: 0; }
.lt::after { border-right-color: #999; border-left: 0; }
.rt::after { border-left-color: #999; border-right: 0; }
.off .up::after { border-bottom-color: #999; }
.off .down::after { border-top-color: #999; }
.off, .off .ar, .off .thumb { width: 14px; }
.vscroll .thumb { flex: 1; border: 1px solid #8b8782; background: repeating-linear-gradient(#b9b5b0 0 1px, #fff 1px 2px, transparent 2px 3px) center / 7px 8px no-repeat, linear-gradient(90deg, #fbfaf8, #e3dfda); }
.hscroll .thumb { flex: 1; border: 1px solid #8b8782; background: repeating-linear-gradient(90deg, #b9b5b0 0 1px, #fff 1px 2px, transparent 2px 3px) center / 8px 7px no-repeat, linear-gradient(#fbfaf8, #e3dfda); }
.track { background: #d6cec6; border: 1px solid #a7a29c; border-width: 0 1px; }
.log-track { height: 27px; }
.dlg-track { height: 42px; }
.end { height: 5px; }

/* log and dialog */
.bottom { flex: 1; display: flex; min-height: 0; }
.log { width: 774px; display: flex; flex-direction: column; }
.dialog { width: 312px; display: flex; flex-direction: column; padding-bottom: 1px; }
.textbox { background: #fff; border: 1px solid #a9a5a0; display: flex; justify-content: space-between; padding: 1px; overflow: hidden; flex: none; }
.log .textbox { height: 86px; letter-spacing: -0.02px; color: #000; }
.log .lines { padding-left: 4px; margin-top: -12px; }
.logbar { display: flex; align-items: center; height: 24px; padding-left: 2px; flex: none; }
.check { width: 13px; height: 13px; background: #fff; border: 1px solid #a9a5a0; }
.all { margin-left: 4px; letter-spacing: -0.2px; flex: 1; }
.level { letter-spacing: -0.15px; margin-right: 4px; }
.combo { width: 72px; height: 22px; border: 1px solid #6f6b67; border-radius: 3px; background: linear-gradient(#fdfdfc, #e7e3de); display: flex; justify-content: space-between; align-items: center; padding: 0 6px 0 4px; }
.combo svg { width: 9px; height: 12px; }
.log .tabs-bottom { margin-top: 2px; }
.dialog .textbox { height: 108px; letter-spacing: -0.18px; color: #3d983c; }
.dialog .lines { padding: 0 0 0 3px; }
.dialog em { color: #6c6c6c; }
.dialog .robot { color: #1432b8; letter-spacing: -0.02px; }
.entry { flex: 1; margin-top: 2px; background: #fff; border: 1px solid #a09c97; border-radius: 3px; }

/* video and applications */
.video-tools { height: 45px; flex: none; border-right: 1px solid #c9c5c0; padding-bottom: 2px; }
.video-tools .btn:first-child, .app-tools .btn:first-child { width: 43px; }
.video-pane { height: 404px; flex: none; padding-top: 82px; }
.video { height: 240px; background: #000; }
.app-tools { height: 44px; flex: none; }
.apps-frame { height: 726px; flex: none; border: 1px solid #9c9893; background: #fff; display: flex; justify-content: space-between; padding: 2px 1px 1px 0; }
.apps { flex: 1; overflow: hidden; padding-left: 7px; background: repeating-linear-gradient(#909090 0 1px, transparent 1px 2px) 11px 0 / 1px 100% no-repeat; }
.app { height: 54px; display: flex; align-items: center; }
.pic { width: 48px; height: 48px; margin: 0 14px 0 8.5px; }
.app p { letter-spacing: -0.19px; margin: 0 0 7px; }
.app p.w { letter-spacing: -0.22px; }
.app em { display: block; font-size: 10px; line-height: 13px; font-style: italic; letter-spacing: -0.45px; margin-left: 16px; }
.beh { height: 33px; display: flex; align-items: center; padding-left: 24px; font: 11.5px/16px "Noto Sans", sans-serif; letter-spacing: -0.15px; }
.beh .wide { letter-spacing: 0.04px; }
.elbow { width: 10px; height: 16px; margin: -15px 2px 0 0; background: repeating-linear-gradient(#909090 0 1px, transparent 1px 2px) 0 0 / 1px 16px no-repeat, repeating-linear-gradient(90deg, #909090 0 1px, transparent 1px 2px) 0 15px / 10px 1px no-repeat; }
.xar { width: 16px; height: 19px; margin-right: 2px; }
.beh span { flex: 1; }
.run { width: 12px; height: 14px; margin-right: 8px; }
.apps-scroll .thumb { flex: none; height: 130px; }
.apps-scroll .track { flex: 1; }
```
